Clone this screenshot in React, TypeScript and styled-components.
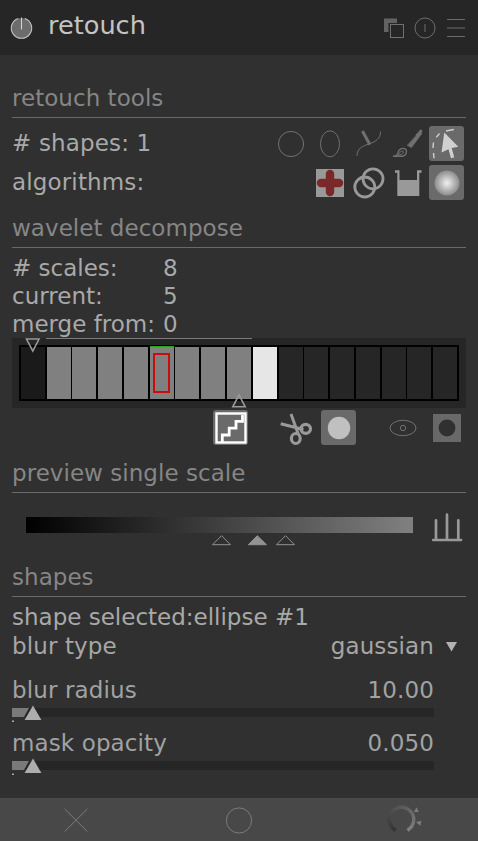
import React from "react";
import styled, { createGlobalStyle } from "styled-components";

const GlobalStyle = createGlobalStyle`
  * { box-sizing: border-box; }
  body { margin: 0; background: #303030; }
  svg { display: block; flex: none; overflow: visible; }
`;

const Panel = styled.div`
  width: 478px;
  height: 841px;
  display: flex;
  flex-direction: column;
  background: #303030;
  color: #a9a9a9;
  font: 23px/27px "DejaVu Sans", sans-serif;
  white-space: nowrap;
  overflow: hidden;
`;

const Header = styled.header`
  height: 55px;
  flex: none;
  display: flex;
  align-items: center;
  padding: 0 11px 0 9px;
  background: #262626;
`;

const Title = styled.h1`
  flex: 1;
  margin: -6px 0 0 13px;
  font-size: 25.6px;
  line-height: 30px;
  font-weight: 400;
  color: #c4c4c4;
`;

const HeaderIcons = styled.div`
  display: flex;
  align-items: center;
  gap: 9px;
`;

const Body = styled.main`
  flex: 1;
  padding: 30px 12px 0;
`;

const Section = styled.section`
  margin-bottom: 15px;
`;

const SectionTitle = styled.h2`
  height: 33px;
  margin: 0;
  border-bottom: 1px solid #6a6a6a;
  font-size: 23px;
  line-height: 27px;
  font-weight: 400;
  letter-spacing: 0.04px;
  color: #868686;
`;

const ToolRow = styled.div<{ $top: number }>`
  display: flex;
  align-items: center;
  gap: 4px;
  height: 35px;
  margin-top: ${(p) => p.$top}px;
  padding-right: 2px;
`;

const ToolLabel = styled.span`
  flex: 1;
  letter-spacing: 0.15px;
`;

const ToolButton = styled.button<{ $active?: boolean; $left?: number }>`
  width: 35px;
  height: 35px;
  flex: none;
  display: flex;
  align-items: center;
  justify-content: center;
  margin: 0 0 0 ${(p) => p.$left ?? 0}px;
  padding: 0;
  border: 0;
  border-radius: 3px;
  background: ${(p) => (p.$active ? "#6a6a6a" : "transparent")};
`;

const ScaleInfo = styled.dl`
  display: grid;
  grid-template-columns: 151px 1fr;
  grid-auto-rows: 28px;
  margin: 0;
  padding-top: 6px;
  line-height: 28px;
`;

const InfoLabel = styled.dt`
  margin: 0;
`;

const InfoValue = styled.dd`
  margin: 0;
`;

const ScaleStrip = styled.div`
  position: relative;
  height: 70px;
  padding: 7px;
  background: #262626;
`;

const Cells = styled.div`
  display: flex;
  height: 56px;
  padding: 2px;
  background: #000;
`;

const Cell = styled.div<{ $fill: string; $gap: number; $current?: boolean }>`
  width: 24px;
  flex: none;
  display: flex;
  align-items: center;
  justify-content: center;
  margin-right: ${(p) => p.$gap}px;
  background: ${(p) => p.$fill};
  box-shadow: ${(p) => (p.$current ? "0 -1px 0 #20a818" : "none")};
`;

const CurrentMark = styled.div`
  width: 17px;
  height: 40px;
  margin-right: 1px;
  border: 2px solid #cb0c0c;
`;

const RangeLine = styled.div`
  position: absolute;
  left: 34px;
  top: 0;
  width: 206px;
  height: 1px;
  background: #7c7c7c;
`;

const Marker = styled.svg<{ $x: number; $y: number }>`
  position: absolute;
  left: ${(p) => p.$x}px;
  top: ${(p) => p.$y}px;
`;

const WaveletTools = styled.div`
  display: flex;
  height: 35px;
  margin-top: 2px;
`;

const PreviewRow = styled.div`
  display: flex;
  height: 71px;
  padding-left: 14px;
`;

const Levels = styled.div`
  width: 387px;
  padding-top: 24px;
`;

const GradientBar = styled.div`
  height: 16px;
  background: linear-gradient(to right, #000, #808080);
`;

const AutoLevels = styled.div`
  margin: 20px 0 0 18px;
`;

const ShapeInfo = styled.div`
  padding-top: 7px;
`;

const Combo = styled.div`
  display: flex;
  justify-content: space-between;
  align-items: center;
  height: 27px;
  margin-top: 2px;
  padding-right: 9px;
  letter-spacing: 0.12px;
  color: #a6a6a6;
`;

const ComboValue = styled.span`
  display: flex;
  align-items: center;
  gap: 12px;
`;

const SliderField = styled.div<{ $top: number }>`
  width: 422px;
  height: 45px;
  margin-top: ${(p) => p.$top}px;
  letter-spacing: 0.12px;
  color: #a2a2a2;
`;

const SliderText = styled.div`
  display: flex;
  justify-content: space-between;
`;

const Track = styled.div`
  height: 9px;
  margin-top: 4px;
  background: #262626;
`;

const Footer = styled.footer`
  height: 43px;
  flex: none;
  display: grid;
  grid-template-columns: 152px 174px 151px;
  justify-items: center;
  align-items: center;
  background: #484848;
`;

const cellGaps = [2, 1, 2, 2, 2, 1, 2, 2, 2, 2, 1, 2, 2, 2, 1, 2, 0];

function cellFill(i: number) {
  if (i === 0) return "#1a1a1a";
  if (i < 9) return "#808080";
  return i === 9 ? "#e6e6e6" : "#262626";
}

function Slider({ label, value, top }: { label: string; value: string; top: number }) {
  return (
    <SliderField $top={top}>
      <SliderText>
        <span>{label}</span>
        <span>{value}</span>
      </SliderText>
      <Track>
        <svg width="34" height="14" viewBox="0 0 34 14">
          <path d="M0 0H17L12 9H0Z" fill="#7a7a7a" />
          <path d="M21 -2.5L29.4 12H12.6Z" fill="#adadad" />
          <rect y="12.5" width="2" height="1.5" fill="#a8a8a8" />
        </svg>
      </Track>
    </SliderField>
  );
}

const dialPoints = Array.from({ length: 27 }, (_, i) => {
  const at = (deg: number) => {
    const a = (deg * Math.PI) / 180;
    return `${(14.5 + 12.3 * Math.cos(a)).toFixed(2)} ${(14.5 + 12.3 * Math.sin(a)).toFixed(2)}`;
  };
  const start = 118 + i * 11.2;
  const g = Math.round(52 + i * 3);
  return { d: `M${at(start)}L${at(start + 12)}`, color: `rgb(${g},${g},${g})` };
});

export default function App() {
  return (
    <>
      <GlobalStyle />
      <Panel>
        <Header>
          <svg width="26" height="26" viewBox="0 0 26 26">
            <circle cx="12.5" cy="13.2" r="10.3" fill="#6c6c6c" />
            <path d="M9.3 3.4A10.2 10.2 0 1 0 15.7 3.4" fill="none" stroke="#c4c4c4" strokeWidth="1.1" />
            <path d="M12.5 2.5V14.5" stroke="#d0d0d0" strokeWidth="1.1" />
          </svg>
          <Title>retouch</Title>
          <HeaderIcons>
            <svg width="22" height="22" viewBox="0 0 22 22">
              <path d="M1 1.5H14V6H5.5V15H1Z" fill="#636363" />
              <rect x="7.5" y="7.5" width="13" height="13" fill="#262626" stroke="#707070" />
            </svg>
            <svg width="22" height="22" viewBox="0 0 22 22" fill="none" stroke="#6c6c6c">
              <circle cx="11" cy="11" r="10" />
              <path d="M11 7V15" />
            </svg>
            <svg width="22" height="22" viewBox="0 0 22 22" stroke="#6c6c6c">
              <path d="M2 2.5H20M2 11H20M2 19.5H20" />
            </svg>
          </HeaderIcons>
        </Header>

        <Body>
          <Section>
            <SectionTitle>retouch tools</SectionTitle>
            <ToolRow $top={8}>
              <ToolLabel># shapes: 1</ToolLabel>
              <ToolButton>
                <svg width="35" height="35" viewBox="0 0 35 35" fill="none" stroke="#707070">
                  <circle cx="18" cy="18" r="12.6" />
                </svg>
              </ToolButton>
              <ToolButton>
                <svg width="35" height="35" viewBox="0 0 35 35" fill="none" stroke="#707070">
                  <ellipse cx="18" cy="17.8" rx="9.5" ry="13" />
                </svg>
              </ToolButton>
              <ToolButton>
                <svg width="35" height="35" viewBox="0 0 35 35" fill="none" stroke="#707070" strokeLinecap="round">
                  <path d="M6 29.5C6 22 12 20 18 18C24 15.5 30 13 29.5 6" />
                  <path d="M12 6L18.2 17.5" strokeWidth="3" />
                </svg>
              </ToolButton>
              <ToolButton>
                <svg width="35" height="35" viewBox="0 0 35 35" fill="none" stroke="#707070" strokeLinecap="round">
                  <path d="M31 5L27 9.5" strokeWidth="2.7" />
                  <path d="M29.5 6L32 7.5L21.5 21.5L17.5 19.5Z" fill="#707070" strokeWidth=".6" />
                  <path d="M3 30.3H12.5C16.5 29.5 17.3 25.5 15.8 23.4C13.5 21.5 9 22.4 8 26.5C7.7 28.5 6 30 3 30.3Z" strokeWidth="1.4" />
                  <path d="M8.5 29C9.5 25 13 24 13.5 26C13.5 28 10.5 29.5 8.5 29" />
                </svg>
              </ToolButton>
              <ToolButton $active>
                <svg width="35" height="35" viewBox="0 0 35 35" fill="none" stroke="#d0d0d0" strokeWidth="1.4">
                  <path d="M5 32.3L4.5 27M4 22L4.5 16.5M7.3 11.2L10.5 7.5M17 5L24.8 3.5" />
                  <path d="M15.3 6.5L29.3 20.8L22.7 22L25.2 31.3L22 32.2L19.5 23.2L12.5 26.5Z" fill="#d0d0d0" stroke="none" />
                </svg>
              </ToolButton>
            </ToolRow>
            <ToolRow $top={4}>
              <ToolLabel>algorithms:</ToolLabel>
              <ToolButton>
                <svg width="35" height="35" viewBox="0 0 35 35">
                  <rect x="4" y="4" width="28" height="28" fill="#999" />
                  <path d="M18 9V27M9 18H27" stroke="#7a2828" strokeWidth="8.4" strokeLinecap="round" />
                </svg>
              </ToolButton>
              <ToolButton>
                <svg width="35" height="35" viewBox="0 0 35 35" fill="none" stroke="#999" strokeWidth="2.8">
                  <circle cx="13.8" cy="22" r="10" />
                  <circle cx="22" cy="13.8" r="10" />
                </svg>
              </ToolButton>
              <ToolButton>
                <svg width="35" height="35" viewBox="0 0 35 35" fill="#999">
                  <path d="M5 5.3H9.5V15H27V5.3H31.5V7.8H29.3V31H7.3V7.8H5Z" />
                </svg>
              </ToolButton>
              <ToolButton $active>
                <svg width="35" height="35" viewBox="0 0 35 35">
                  <defs>
                    <radialGradient id="blurGlow">
                      <stop offset="0" stopColor="#eee" />
                      <stop offset=".2" stopColor="#ddd" />
                      <stop offset="1" stopColor="#8c8c8c" />
                    </radialGradient>
                  </defs>
                  <circle cx="18" cy="18" r="12.5" fill="url(#blurGlow)" />
                </svg>
              </ToolButton>
            </ToolRow>
          </Section>

          <Section>
            <SectionTitle>wavelet decompose</SectionTitle>
            <ScaleInfo>
              <InfoLabel># scales:</InfoLabel>
              <InfoValue>8</InfoValue>
              <InfoLabel>current:</InfoLabel>
              <InfoValue>5</InfoValue>
              <InfoLabel>merge from:</InfoLabel>
              <InfoValue>0</InfoValue>
            </ScaleInfo>
            <ScaleStrip>
              <Cells>
                {cellGaps.map((gap, i) => (
                  <Cell key={i} $fill={cellFill(i)} $gap={gap} $current={i === 5}>
                    {i === 5 && <CurrentMark />}
                  </Cell>
                ))}
              </Cells>
              <RangeLine />
              <Marker $x={13} $y={0} width="16" height="15" viewBox="0 0 16 15">
                <path d="M1.5 1H14L7.8 13Z" fill="none" stroke="#999" strokeWidth="1.6" />
              </Marker>
              <Marker $x={219} $y={55} width="16" height="15" viewBox="0 0 16 15">
                <path d="M1.8 13.8H14.2L8 2Z" fill="none" stroke="#999" strokeWidth="1.6" />
              </Marker>
            </ScaleStrip>
            <WaveletTools>
              <ToolButton $active $left={201}>
                <svg width="35" height="35" viewBox="0 0 35 35" fill="none" stroke="#fff">
                  <rect x="3.5" y="3.5" width="29" height="29" strokeWidth="2.4" />
                  <path d="M9.3 32V25H16.2V18.2H23V11.3H29.5V5" strokeWidth="2.8" />
                </svg>
              </ToolButton>
              <ToolButton $left={30}>
                <svg width="35" height="35" viewBox="0 0 35 35" fill="none" stroke="#999">
                  <path d="M13 4L20.4 24.5M2.7 13.8L25.5 19.5" strokeWidth="3" />
                  <ellipse cx="27.7" cy="18.8" rx="4.8" ry="4.5" strokeWidth="3.2" />
                  <ellipse cx="17.8" cy="28.5" rx="4.4" ry="5" strokeWidth="3.2" />
                </svg>
              </ToolButton>
              <ToolButton $active $left={8}>
                <svg width="35" height="35" viewBox="0 0 35 35">
                  <circle cx="18" cy="18" r="11.2" fill="#c0c0c0" />
                </svg>
              </ToolButton>
              <ToolButton $left={29}>
                <svg width="35" height="35" viewBox="0 0 35 35" fill="none" stroke="#707070">
                  <ellipse cx="18" cy="18" rx="13" ry="7.7" />
                  <circle cx="18" cy="18" r="2.7" />
                </svg>
              </ToolButton>
              <ToolButton $left={9}>
                <svg width="35" height="35" viewBox="0 0 35 35">
                  <rect x="4" y="4" width="28" height="28" fill="#686868" />
                  <circle cx="18" cy="18" r="8.4" fill="#303030" />
                </svg>
              </ToolButton>
            </WaveletTools>
          </Section>

          <SectionTitle>preview single scale</SectionTitle>
          <PreviewRow>
            <Levels>
              <GradientBar />
              <svg width="387" height="14" viewBox="0 0 387 14" fill="none" stroke="#929292">
                <path d="M186.5 11.7L195.5 2.7L204.5 11.7Z" />
                <path d="M222.3 11.7L231.3 2.7L240.5 11.7Z" fill="#929292" />
                <path d="M250.5 11.7L259.5 2.7L268.5 11.7Z" />
              </svg>
            </Levels>
            <AutoLevels>
              <svg width="31" height="30" viewBox="0 0 31 30" fill="none" stroke="#999" strokeWidth="2.7" strokeLinecap="round">
                <path d="M2.2 27H30M5 26V7.3M16 26V1.7M27.3 26V7.3" />
              </svg>
            </AutoLevels>
          </PreviewRow>

          <SectionTitle>shapes</SectionTitle>
          <ShapeInfo>shape selected:ellipse #1</ShapeInfo>
          <Combo>
            <span>blur type</span>
            <ComboValue>
              gaussian
              <svg width="11" height="10" viewBox="0 0 11 10">
                <path d="M0 0H11L5.5 9.5Z" fill="#b2b2b2" />
              </svg>
            </ComboValue>
          </Combo>
          <Slider label="blur radius" value="10.00" top={17} />
          <Slider label="mask opacity" value="0.050" top={8} />
        </Body>

        <Footer>
          <svg width="24" height="24" viewBox="0 0 24 24" stroke="#7c7c7c">
            <path d="M.7 1L23.3 23.5M23.3 1L.7 23.5" />
          </svg>
          <svg width="28" height="28" viewBox="0 0 28 28" fill="none" stroke="#7c7c7c">
            <circle cx="14" cy="14.5" r="12.6" />
          </svg>
          <svg width="29" height="29" viewBox="0 0 29 29" fill="none">
            {dialPoints.map((p) => (
              <path key={p.d} d={p.d} stroke={p.color} strokeWidth="3.4" />
            ))}
            <path d="M27 7L29.5 2.3L31.8 7ZM29 17L34.5 15.8L33.3 21Z" fill="#7c7c7c" />
          </svg>
        </Footer>
      </Panel>
    </>
  );
}
